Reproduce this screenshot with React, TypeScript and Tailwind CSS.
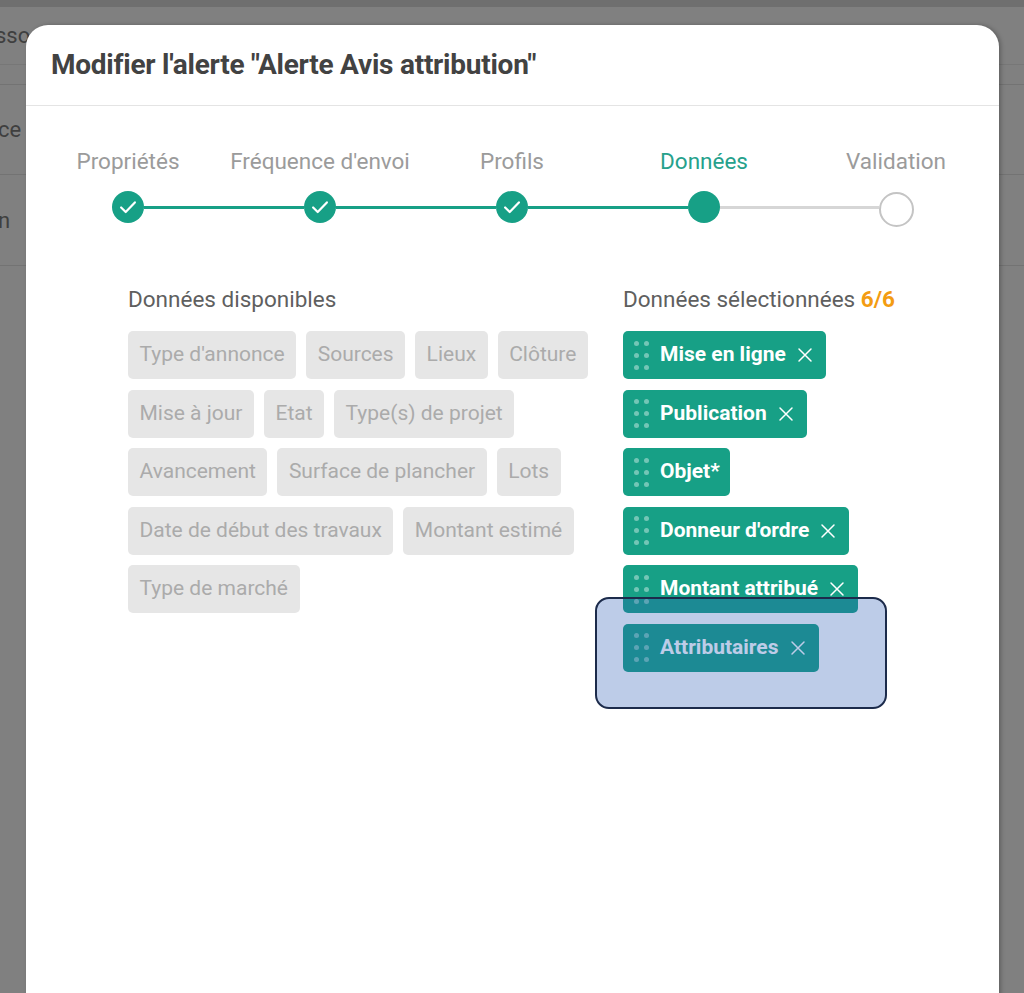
import React from "react";

const font = { fontFamily: "Roboto, 'Noto Sans', Arial, sans-serif" };

type StepState = "done" | "active" | "todo";
const steps: { label: string; state: StepState }[] = [
  { label: "Propriétés", state: "done" },
  { label: "Fréquence d'envoi", state: "done" },
  { label: "Profils", state: "done" },
  { label: "Données", state: "active" },
  { label: "Validation", state: "todo" },
];

function Check() {
  return (
    <svg width="22" height="22" viewBox="0 0 24 24" fill="none">
      <path d="M4.5 12.5l5 5L19.5 7" stroke="white" strokeWidth="2.4" strokeLinecap="round" strokeLinejoin="round" />
    </svg>
  );
}

function Cross() {
  return (
    <svg width="16" height="16" viewBox="0 0 16 16" fill="none">
      <path d="M2 2L14 14M14 2L2 14" stroke="currentColor" strokeWidth="1.5" strokeLinecap="round" />
    </svg>
  );
}

function Stepper() {
  const activeIdx = 3;
  return (
    <div className="ml-[6px] grid w-[960px] grid-cols-5 pt-[41px]">
      {steps.map((s, i) => (
        <div key={s.label} className="flex flex-col items-center">
          <div
            className={
              s.state === "active"
                ? "h-[28px] whitespace-nowrap text-[22.5px] leading-[28px] text-[#26a18c]"
                : "h-[28px] whitespace-nowrap text-[22.5px] leading-[28px] text-[#9b9b9b]"
            }
          >
            {s.label}
          </div>
          <div className="mt-[15px] flex h-[34px] w-full items-center">
            <div
              className={
                i === 0
                  ? "h-[3px] flex-1"
                  : i <= activeIdx
                  ? "h-[3px] flex-1 bg-[#17a086]"
                  : "h-[3px] flex-1 bg-[#d6d6d6]"
              }
            />
            {s.state === "done" && (
              <div className="flex h-[32px] w-[32px] items-center justify-center rounded-full bg-[#17a086]">
                <Check />
              </div>
            )}
            {s.state === "active" && <div className="h-[32px] w-[32px] rounded-full bg-[#17a086]" />}
            {s.state === "todo" && (
              <div className="mt-[5px] h-[35px] w-[35px] rounded-full border-2 border-[#c4c4c4] bg-white" />
            )}
            <div
              className={
                i === 4
                  ? "h-[3px] flex-1"
                  : i < activeIdx
                  ? "h-[3px] flex-1 bg-[#17a086]"
                  : "h-[3px] flex-1 bg-[#d6d6d6]"
              }
            />
          </div>
        </div>
      ))}
    </div>
  );
}

const available = [
  ["Type d'annonce", "Sources", "Lieux", "Clôture"],
  ["Mise à jour", "Etat", "Type(s) de projet"],
  ["Avancement", "Surface de plancher", "Lots"],
  ["Date de début des travaux", "Montant estimé"],
  ["Type de marché"],
];

const selected: { label: string; removable: boolean }[] = [
  { label: "Mise en ligne", removable: true },
  { label: "Publication", removable: true },
  { label: "Objet*", removable: false },
  { label: "Donneur d'ordre", removable: true },
  { label: "Montant attribué", removable: true },
  { label: "Attributaires", removable: true },
];

function Dots() {
  return (
    <div className="grid grid-cols-2 gap-x-[5px] gap-y-[7px]">
      {[0, 1, 2, 3, 4, 5].map((d) => (
        <div key={d} className="h-[5px] w-[5px] rounded-full bg-white/40" />
      ))}
    </div>
  );
}

function SelectedChip({ label, removable }: { label: string; removable: boolean }) {
  return (
    <div
      className={
        removable
          ? "flex h-[48px] items-center rounded-[5px] bg-[#17a086] pl-[11px] pr-[13px] text-white"
          : "flex h-[48px] items-center rounded-[5px] bg-[#17a086] pl-[11px] pr-[10px] text-white"
      }
    >
      <Dots />
      <span className="ml-[11px] whitespace-nowrap text-[21px] font-bold">{label}</span>
      {removable && (
        <span className="ml-[11px] flex items-center text-white">
          <Cross />
        </span>
      )}
    </div>
  );
}

export default function App() {
  return (
    <div className="relative h-[993px] w-[1024px] overflow-hidden bg-[#808080]" style={font}>
      {/* background page (dimmed) */}
      <div className="h-[7px] bg-[#6f6f6f]" />
      <div className="flex h-[58px] items-center border-b border-[#777777]">
        <span className="ml-[-5px] whitespace-nowrap text-[22px] text-[#3f3f3f]">ssociation</span>
      </div>
      <div className="h-[20px] border-b border-[#737373]" />
      <div className="flex h-[90px] items-center border-b border-[#737373]">
        <span className="ml-[-2px] whitespace-nowrap text-[22px] text-[#3f3f3f]">ce</span>
      </div>
      <div className="flex h-[91px] items-center border-b border-[#737373]">
        <span className="ml-[-2px] whitespace-nowrap text-[22px] text-[#3f3f3f]">n</span>
      </div>

      {/* modal */}
      <div className="absolute left-[26px] top-[25px] h-[1000px] w-[973px] rounded-t-[22px] bg-white shadow-[2px_0_4px_rgba(0,0,0,0.25)]">
        <div className="flex h-[81px] items-center border-b border-[#e4e4e4] pl-[25px]">
          <h1 className="whitespace-nowrap text-[28px] font-bold tracking-[-0.25px] text-[#424242]">
            Modifier l'alerte "Alerte Avis attribution"
          </h1>
        </div>

        <Stepper />

        <div className="mt-[62px] flex pl-[102px]">
          {/* available */}
          <div className="w-[495px]">
            <div className="h-[26px] whitespace-nowrap text-[22.5px] leading-[26px] text-[#5f5f5f]">Données disponibles</div>
            <div className="mt-[19px] flex flex-col gap-[10.5px]">
              {available.map((row, ri) => (
                <div key={ri} className="flex gap-[10px]">
                  {row.map((c) => (
                    <div
                      key={c}
                      className="flex h-[48px] items-center whitespace-nowrap rounded-[5px] bg-[#e6e6e6] px-[11.5px] text-[21px] text-[#ababab]"
                    >
                      {c}
                    </div>
                  ))}
                </div>
              ))}
            </div>
          </div>

          {/* selected */}
          <div>
            <div className="h-[26px] whitespace-nowrap text-[22.5px] leading-[26px] text-[#5f5f5f]">
              Données sélectionnées <span className="font-bold text-[#f39c12]">6/6</span>
            </div>
            <div className="mt-[19px] flex flex-col items-start gap-[10.5px]">
              {selected.map((s, i) => (
                <div key={s.label} className="relative">
                  <SelectedChip label={s.label} removable={s.removable} />
                  {i === selected.length - 1 && (
                    <div className="absolute left-[-28px] top-[-27px] z-10 h-[112px] w-[292px] rounded-[14px] border-2 border-[#1c2b4b] bg-[rgba(41,89,181,0.31)]" />
                  )}
                </div>
              ))}
            </div>
          </div>
        </div>
      </div>
    </div>
  );
}
